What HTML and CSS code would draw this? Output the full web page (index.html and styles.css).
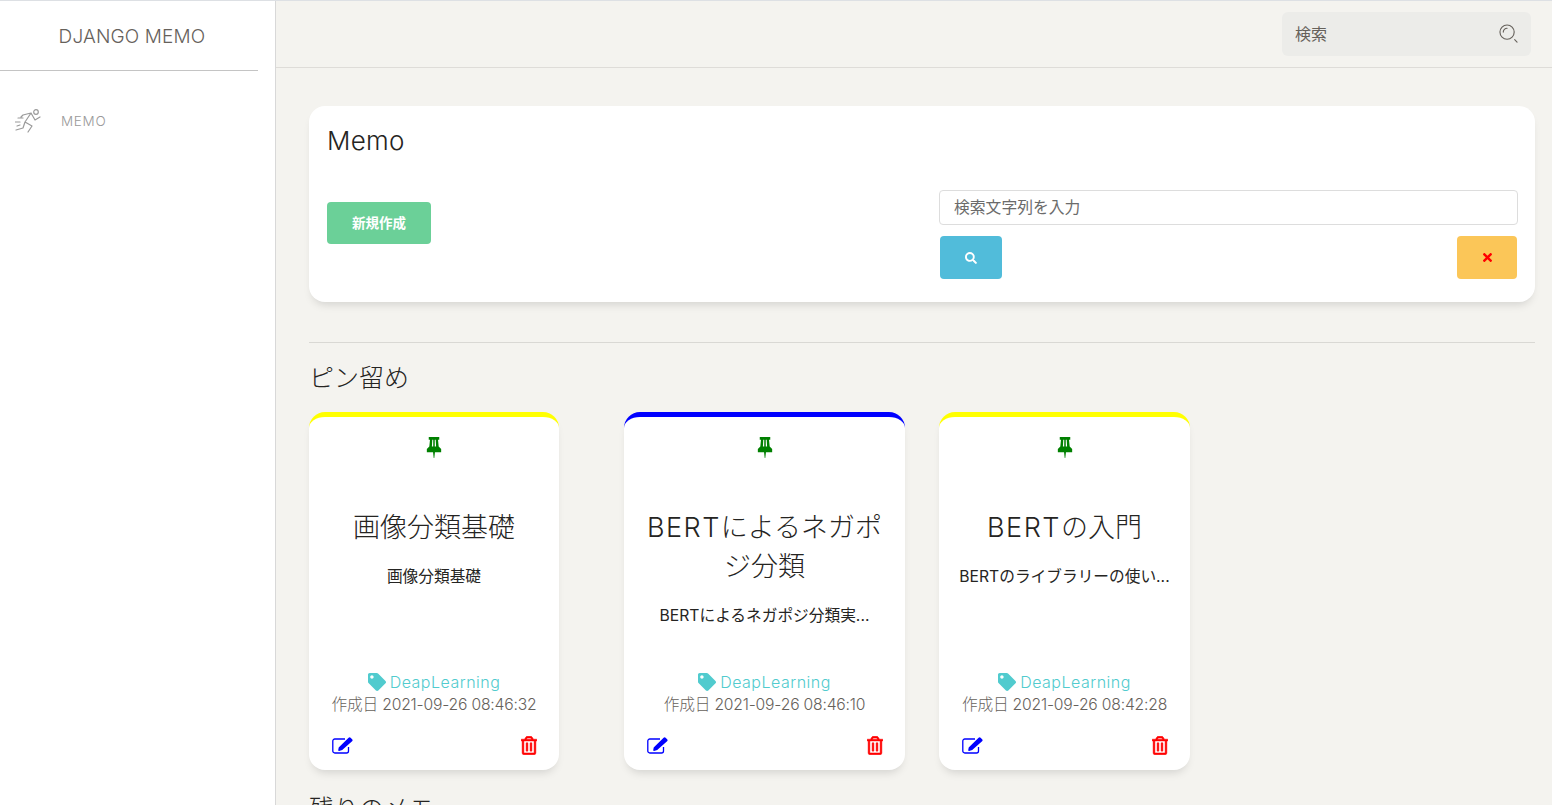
FILE: index.html
```html
<!DOCTYPE html>
<html lang="ja">
<head>
<meta charset="utf-8">
<title>DJANGO MEMO</title>
<link rel="stylesheet" href="styles.css">
</head>
<body>
<svg class="defs" aria-hidden="true">
  <symbol id="i-pin" viewBox="0 0 16 22">
    <path fill-rule="evenodd" d="M2.5 0h11v3h-1.300l.7 7L15.500 12.500V16H9l-.7 6h-.6L7 16H.5v-3.500L3.100 10l.7-7H2.500zM6.200 3l-.4 7h1.400V3zm2.600 0v7h1.400l-.4-7z"/>
  </symbol>
  <symbol id="i-tag" viewBox="0 0 512 512">
    <path d="M0 252.118V48C0 21.490 21.490 0 48 0h204.118a48 48 0 0 1 33.941 14.059l211.882 211.882c18.745 18.745 18.745 49.137 0 67.882L293.823 497.941c-18.745 18.745-49.137 18.745-67.882 0L14.059 286.059A48 48 0 0 1 0 252.118zM112 64c-26.510 0-48 21.490-48 48s21.490 48 48 48 48-21.490 48-48-21.490-48-48-48z"/>
  </symbol>
  <symbol id="i-edit" viewBox="0 0 21 17">
    <path class="edit-box" d="M16.500 10v4a2 2 0 0 1-2 2H2.800a2 2 0 0 1-2-2V4a2 2 0 0 1 2-2H13"/>
    <path d="M6.200 13.300l.5-2.800L16.600.7a1.400 1.400 0 0 1 2 0l1.500 1.500a1.400 1.400 0 0 1 0 2L10.200 13l-3 .9a.8.8 0 0 1-1-.6z"/>
  </symbol>
  <symbol id="i-trash" viewBox="0 0 448 512">
    <path d="M268 416h24a12 12 0 0 0 12-12V188a12 12 0 0 0-12-12h-24a12 12 0 0 0-12 12v216a12 12 0 0 0 12 12zM432 80h-82.410l-34-56.700A48 48 0 0 0 274.410 0H173.590a48 48 0 0 0-41.160 23.300L98.410 80H16A16 16 0 0 0 0 96v16a16 16 0 0 0 16 16h16v336a48 48 0 0 0 48 48h288a48 48 0 0 0 48-48V128h16a16 16 0 0 0 16-16V96a16 16 0 0 0-16-16zM171.840 50.910A6 6 0 0 1 177 48h94a6 6 0 0 1 5.150 2.910L293.610 80H154.390zM368 464H80V128h288zm-212-48h24a12 12 0 0 0 12-12V188a12 12 0 0 0-12-12h-24a12 12 0 0 0-12 12v216a12 12 0 0 0 12 12z"/>
  </symbol>
</svg>
<div class="app">
  <aside class="sidebar">
    <div class="brand">DJANGO MEMO</div>
    <nav class="side-nav">
      <a class="side-link" href="#">
        <svg class="runner" viewBox="0 0 28 26" fill="none" stroke="currentColor" stroke-width="1.200" stroke-linecap="round" stroke-linejoin="round">
          <circle cx="21" cy="4" r="2.300"/>
          <path d="M25 9l-5 3-4-7-8 2-2 2M16 5l-6 9 7 4-4 6M10 14l-2 6-7 2M3 10h5M0 14h5M2 18l3-1"/>
        </svg>
        <span>MEMO</span>
      </a>
    </nav>
  </aside>
  <div class="main">
    <header class="topbar">
      <div class="top-search">
        <span>検索</span>
        <svg class="top-search-icon" viewBox="0 0 20 20" fill="none" stroke="currentColor" stroke-width="1.200" stroke-linecap="round">
          <circle cx="8.500" cy="8.500" r="7.500"/>
          <path d="M4.500 8.500a4 4 0 0 1 4-4M16.500 16.500l2.500 2.500"/>
        </svg>
      </div>
    </header>
    <main class="content">
      <section class="panel">
        <h2 class="panel-title">Memo</h2>
        <div class="panel-row">
          <div class="panel-left"><a class="btn btn-new" href="#">新規作成</a></div>
          <form class="panel-form">
            <input class="search-input" type="text" placeholder="検索文字列を入力">
            <div class="form-buttons">
              <button class="btn btn-search" type="button">
                <svg class="btn-icon" viewBox="0 0 512 512"><path d="M505 442.700L405.300 343c-4.500-4.500-10.600-7-17-7H372c27.600-35.300 44-79.700 44-128C416 93.100 322.900 0 208 0S0 93.100 0 208s93.100 208 208 208c48.300 0 92.700-16.400 128-44v16.300c0 6.400 2.500 12.500 7 17l99.700 99.700c9.400 9.400 24.600 9.400 33.900 0l28.300-28.300c9.400-9.400 9.400-24.600.1-34zM208 336c-70.700 0-128-57.200-128-128 0-70.700 57.200-128 128-128 70.700 0 128 57.200 128 128 0 70.700-57.200 128-128 128z"/></svg>
              </button>
              <button class="btn btn-clear" type="button">
                <svg class="btn-icon-x" viewBox="0 0 352 352"><path d="M242.720 176l100.070-100.070c12.280-12.280 12.280-32.190 0-44.480l-22.240-22.240c-12.280-12.280-32.190-12.280-44.480 0L176 109.280 75.930 9.210c-12.280-12.280-32.190-12.280-44.480 0L9.210 31.450c-12.280 12.280-12.280 32.190 0 44.480L109.280 176 9.210 276.070c-12.280 12.280-12.280 32.190 0 44.480l22.240 22.240c12.280 12.280 32.200 12.280 44.480 0L176 242.720l100.070 100.070c12.280 12.280 32.200 12.280 44.480 0l22.240-22.240c12.280-12.280 12.280-32.190 0-44.480L242.720 176z"/></svg>
              </button>
            </div>
          </form>
        </div>
      </section>
      <hr class="rule">
      <h3 class="section-title">ピン留め</h3>
      <div class="cards">
        <article class="card card-first border-yellow">
          <svg class="pin"><use href="#i-pin"/></svg>
          <h4 class="card-title">画像分類基礎</h4>
          <p class="card-text">画像分類基礎</p>
          <div class="card-foot">
            <div class="card-tag"><svg class="tag-icon"><use href="#i-tag"/></svg><span>DeapLearning</span></div>
            <div class="card-date">作成日 2021-09-26 08:46:32</div>
            <div class="card-actions"><svg class="edit-icon"><use href="#i-edit"/></svg><svg class="trash-icon"><use href="#i-trash"/></svg></div>
          </div>
        </article>
        <article class="card card-second border-blue">
          <svg class="pin"><use href="#i-pin"/></svg>
          <h4 class="card-title"><span class="latin">BERT</span>によるネガポジ分類</h4>
          <p class="card-text">BERTによるネガポジ分類実...</p>
          <div class="card-foot">
            <div class="card-tag"><svg class="tag-icon"><use href="#i-tag"/></svg><span>DeapLearning</span></div>
            <div class="card-date">作成日 2021-09-26 08:46:10</div>
            <div class="card-actions"><svg class="edit-icon"><use href="#i-edit"/></svg><svg class="trash-icon"><use href="#i-trash"/></svg></div>
          </div>
        </article>
        <article class="card card-third border-yellow">
          <svg class="pin"><use href="#i-pin"/></svg>
          <h4 class="card-title"><span class="latin">BERT</span>の入門</h4>
          <p class="card-text">BERTのライブラリーの使い...</p>
          <div class="card-foot">
            <div class="card-tag"><svg class="tag-icon"><use href="#i-tag"/></svg><span>DeapLearning</span></div>
            <div class="card-date">作成日 2021-09-26 08:42:28</div>
            <div class="card-actions"><svg class="edit-icon"><use href="#i-edit"/></svg><svg class="trash-icon"><use href="#i-trash"/></svg></div>
          </div>
        </article>
      </div>
      <h3 class="section-title section-rest">残りのメモ</h3>
    </main>
  </div>
</div>
</body>
</html>
```
FILE: styles.css
```css
* { box-sizing: border-box; }
html, body { height: 100%; }
body {
  margin: 0;
  background: #f4f3ef;
  color: #2c2c2c;
  font-family: "Inter", "Noto Sans CJK JP", sans-serif;
  font-weight: 300;
  overflow: hidden;
}
.defs { display: none; }
.app {
  display: flex;
  height: 805px;
  border-top: 1px solid #dde0e4;
  overflow: hidden;
}
.sidebar {
  flex: 0 0 276px;
  background: #fff;
  border-right: 1px solid #d8d8d8;
}
.brand {
  width: 258px;
  height: 70px;
  border-bottom: 1px solid #c4c4c4;
  padding: 25px 0 0 6px;
  text-align: center;
  font-size: 19px;
  line-height: 22px;
  letter-spacing: 0.15px;
  color: #66615b;
}
.side-nav { padding-top: 36px; }
.side-link {
  display: flex;
  align-items: center;
  padding-left: 15px;
  height: 28px;
  color: #9a9a9a;
  font-size: 13.5px;
  letter-spacing: 0.7px;
  text-decoration: none;
}
.runner { width: 28px; height: 26px; margin-right: 18px; }
.main { flex: 1; min-width: 0; }
.topbar {
  display: flex;
  justify-content: flex-end;
  align-items: flex-start;
  height: 67px;
  border-bottom: 1px solid #dedcd8;
  padding: 11px 21px 0 0;
}
.top-search {
  display: flex;
  align-items: center;
  justify-content: space-between;
  width: 249px;
  height: 44px;
  padding: 0 13px 2px;
  background: #ecece9;
  border-radius: 6px;
  color: #66615b;
  font-size: 16px;
  font-weight: 400;
}
.top-search-icon { width: 19px; height: 19px; color: #66615b; }
.content { padding: 38px 17px 0 33px; }
.panel {
  height: 196px;
  background: #fff;
  border-radius: 16px;
  padding: 19px 17px 0 18px;
  box-shadow: 0 6px 10px -4px rgba(0, 0, 0, 0.15);
}
.panel-title {
  margin: 0;
  font-size: 26px;
  line-height: 32px;
  font-weight: 300;
  letter-spacing: 0.3px;
  color: #252422;
}
.panel-row { display: flex; margin-top: 33px; }
.panel-left { flex: 0 0 612px; padding-top: 12px; }
.btn {
  display: inline-flex;
  align-items: center;
  justify-content: center;
  border: 0;
  border-radius: 4px;
  color: #fff;
  text-decoration: none;
  padding: 0;
}
.btn-new {
  width: 104px;
  height: 42px;
  padding-bottom: 2px;
  background: #6bd098;
  font-size: 13.5px;
  font-weight: 700;
}
.panel-form { flex: 1; }
.search-input {
  display: block;
  width: 579px;
  height: 35px;
  border: 1px solid #dddddd;
  border-radius: 4px;
  padding: 0 14px 1px;
  font-family: inherit;
  font-size: 15.8px;
  font-weight: 400;
  color: #66615b;
  background: #fff;
}
.search-input::placeholder { color: #6b6b6b; opacity: 1; }
.form-buttons {
  display: flex;
  justify-content: space-between;
  margin: 11px 1px 0 1px;
}
.btn-search { width: 62px; height: 43px; background: #51bcda; }
.btn-clear { width: 60px; height: 43px; background: #fbc658; }
.btn-icon { width: 12px; height: 12px; fill: #fff; }
.btn-icon-x { width: 9px; height: 9px; fill: #ff0000; }
.rule {
  margin: 40px 0 0;
  border: 0;
  border-top: 1px solid #d9d8d4;
}
.section-title {
  margin: 17px 0 0;
  font-size: 25px;
  line-height: 36px;
  font-weight: 300;
  color: #252422;
}
.section-rest { margin-top: 21px; }
.cards { display: flex; gap: 34px; margin-top: 16px; }
.card {
  display: flex;
  flex-direction: column;
  height: 358px;
  background: #fff;
  border-radius: 16px;
  border-top: 5px solid;
  padding: 20px 22px 0;
  box-shadow: 0 6px 10px -4px rgba(0, 0, 0, 0.15);
  text-align: center;
}
.card-first { width: 250px; margin-right: 31px; }
.card-second { width: 281px; }
.card-third { width: 251px; }
.border-yellow { border-top-color: #ffff00; }
.border-blue { border-top-color: #0000ff; }
.pin {
  flex: none;
  display: block;
  width: 16px;
  height: 21px;
  margin: 0 auto;
  fill: #008000;
}
.card-title {
  margin: 50px 0 0;
  font-size: 27px;
  line-height: 39px;
  font-weight: 300;
  color: #252422;
}
.latin { letter-spacing: 1.5px; }
.card-text {
  margin: 18px -10px 0;
  font-size: 15.7px;
  line-height: 24px;
  color: #252422;
  font-weight: 400;
}
.card-foot { margin: auto 0 0; padding-bottom: 15px; }
.card-tag {
  display: flex;
  align-items: center;
  justify-content: center;
  gap: 4px;
  height: 22px;
  padding-bottom: 1px;
  font-size: 16px;
  letter-spacing: 0.5px;
  color: #51cbce;
}
.tag-icon { width: 18px; height: 18px; fill: #51cbce; }
.card-date {
  height: 25px;
  margin: 0 -5px;
  font-size: 15.7px;
  line-height: 24px;
  letter-spacing: -0.2px;
  color: #66615b;
  white-space: nowrap;
}
.card-actions {
  display: flex;
  justify-content: space-between;
  align-items: center;
  margin: 17px 0 0 1px;
  height: 20px;
}
.edit-icon { width: 21px; height: 17px; fill: #0000ff; stroke: none; }
.edit-box { fill: none; stroke: #0000ff; stroke-width: 1.3; }
.trash-icon { width: 16px; height: 19px; fill: #ff0000; stroke: #ff0000; stroke-width: 14; }
```
